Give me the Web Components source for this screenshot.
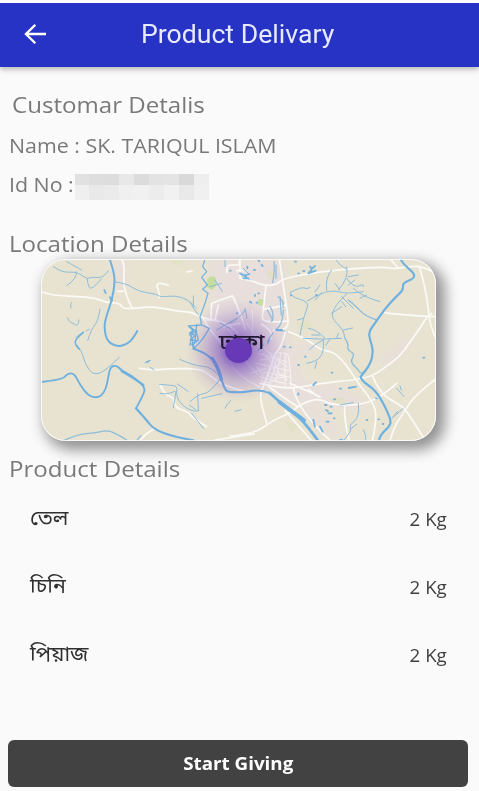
<!DOCTYPE html>
<html lang="en">
<head>
<meta charset="utf-8">
<title>Product Delivary</title>
<style>
body{margin:0;background:#fafafa;font-family:"Open Sans","Noto Sans Bengali",sans-serif}
</style>
</head>
<body>
<delivery-page>
  <app-bar slot="bar">Product Delivary</app-bar>
  <text-line style="--size:22.5px;--h:30px;--sx:1.07;margin:22px 0 0 3px">Customar Detalis</text-line>
  <text-line style="--size:20.5px;--h:28px;--sx:1.043;margin-top:11px">Name : SK. TARIQUL ISLAM</text-line>
  <text-line style="--size:20.5px;--h:28px;--sx:1.043;margin-top:11px">Id No :<masked-value slot="extra"></masked-value></text-line>
  <text-line style="--size:22.5px;--h:30px;--sx:1.07;margin-top:31.5px">Location Details</text-line>
  <map-card>ঢাকা</map-card>
  <text-line style="--size:22.5px;--h:30px;--sx:1.07;margin-top:13.5px">Product Details</text-line>
  <product-row amount="2 Kg">তেল</product-row>
  <product-row amount="2 Kg">চিনি</product-row>
  <product-row amount="2 Kg">পিয়াজ</product-row>
  <action-button slot="action">Start Giving</action-button>
</delivery-page>
<script>
// Turns a polyline path into a curve that bends at each vertex.
const smooth = d => {
  const lines = [];
  const tokens = d.match(/[a-zA-Z]|-?\d*\.?\d+/g);
  let cmd = 'M', x = 0, y = 0, i = 0;
  while (i < tokens.length) {
    if (/[a-zA-Z]/.test(tokens[i])) cmd = tokens[i++];
    const next = () => +tokens[i++];
    if (cmd === 'M') { x = next(); y = next(); lines.push([]); }
    else if (cmd === 'L') { x = next(); y = next(); }
    else if (cmd === 'l') { x += next(); y += next(); }
    else if (cmd === 'h') x += next();
    else if (cmd === 'H') x = next();
    else if (cmd === 'v') y += next();
    else if (cmd === 'V') y = next();
    lines[lines.length - 1].push([x, y]);
    if (cmd === 'M') cmd = 'L';
  }
  return lines.map(p => {
    let out = `M${p[0]}`;
    for (let k = 1; k < p.length - 1; k++) {
      const mid = [(p[k][0] + p[k + 1][0]) / 2, (p[k][1] + p[k + 1][1]) / 2];
      out += `Q${p[k]} ${k === p.length - 2 ? p[k + 1] : mid}`;
    }
    return p.length === 2 ? out + `L${p[1]}` : out;
  }).join('');
};

const define = (name, html) => customElements.define(name, class extends HTMLElement {
  constructor() {
    super();
    this.attachShadow({ mode: 'open' }).innerHTML = html;
    this.shadowRoot.querySelectorAll('.smooth path').forEach(p => p.setAttribute('d', smooth(p.getAttribute('d'))));
  }
  connectedCallback() {
    const amount = this.shadowRoot.querySelector('.amount');
    if (amount) amount.textContent = this.getAttribute('amount');
  }
});

define('delivery-page', `
<style>
:host{display:flex;flex-direction:column;height:791px;overflow:hidden;background:#fafafa}
main{flex:1;padding:0 9px;min-height:0}
footer{padding:0 11px 4px 8px}
</style>
<slot name="bar"></slot><main><slot></slot></main><footer><slot name="action"></slot></footer>`);

define('app-bar', `
<style>
:host{display:grid;grid-template-columns:141px 1fr;align-items:center;height:64px;margin-bottom:.5px;border-top:3px solid #fff;background:#2733c4;color:#e8eaff;box-shadow:0 2px 6px rgba(0,0,0,.3);font:25px/30px Roboto,sans-serif}
svg{display:block;margin-left:23px;width:24px;height:24px}
span{display:inline-block;transform:scaleX(1.065);transform-origin:0 50%;white-space:nowrap}
</style>
<svg viewBox="0 0 24 24" fill="none" stroke="#fff" stroke-width="2.3"><path d="M23 11H2.5M12.3 1.9 2.9 11l9.4 9.3"/></svg>
<div><span><slot></slot></span></div>`);

define('text-line', `
<style>
:host{display:flex;height:var(--h);font-size:var(--size);line-height:var(--h);color:#797979;white-space:nowrap}
span{display:block;transform:scaleX(var(--sx));transform-origin:0 50%;margin-left:-.2px}
</style>
<span><slot></slot></span><slot name="extra"></slot>`);

define('masked-value', `
<style>
:host{display:grid;grid-template-columns:14px 15px 15px 15px 15px 15px 15px 15px 15px;grid-template-rows:11px 15px;margin:4px 0 0 3.7px;height:26px}
</style>${['e1e1e1', 'dedede', 'dddddd', 'e8e8e8', 'dcdcdc', 'e3e3e3', 'e4e4e4', 'd9d9d9', 'eeeeee',
  'efefef', 'e9e9e9', 'ebebeb', 'f0f0f0', 'f1f1f1', 'ececec', 'f1f1f1', 'e9e9e9', 'f0f0f0']
  .map(c => `<i style="background:#${c}"></i>`).join('')}`);

define('product-row', `
<style>
:host{display:flex;justify-content:space-between;align-items:center;height:68.2px;color:#404040}
span{display:block;line-height:28px;white-space:nowrap}
.name{font:20px/28px "Noto Sans Bengali","Open Sans",sans-serif;transform:scaleX(1.07);transform-origin:0 50%;color:#303030;margin-left:20.5px;padding-top:3px}
.amount{font-size:17.5px;transform:scaleX(1.07);transform-origin:100% 50%;margin-right:23px;padding-top:1px}
</style>
<span class="name"><slot></slot></span><span class="amount"></span>`);

define('action-button', `
<style>
:host{display:flex;justify-content:center;align-items:center;height:47.5px;border-radius:6px;background:#424242;color:#fff;font-weight:700;font-size:18.5px;line-height:28px}
span{transform:scaleX(1.015)}
</style><span><slot></slot></span>`);

define('map-card', `
<style>
:host{display:block;position:relative;width:395px;height:182px;margin:-.5px 0 0 32px;border-radius:25px;box-shadow:6px 6px 14px 3px rgba(0,0,0,.42)}
svg{display:block;width:395px;height:182px;border-radius:25px}
.glow{position:absolute;left:142px;top:38px;width:108px;height:108px;background:radial-gradient(circle,rgba(103,58,183,.8) 10%,rgba(103,58,183,.5) 24%,rgba(103,58,183,.26) 40%,rgba(103,58,183,.08) 56%,rgba(103,58,183,0) 68%)}
.city{position:absolute;left:178px;top:71px;font:500 21px/28px "Noto Sans Bengali",sans-serif;color:#211832;white-space:nowrap;transform:scaleX(1.14);transform-origin:0 50%}
.pin{position:absolute;left:184px;top:79.5px;width:27px;height:25px;border-radius:50%;background:#6839b7}
.frame{position:absolute;inset:0;border:1.7px solid rgba(252,252,250,.9);border-radius:25px}
</style>
<svg viewBox="33 27 1185 546" preserveAspectRatio="none" fill="none" stroke-linecap="round" stroke-linejoin="round">
<defs><filter id="soft"><feGaussianBlur stdDeviation="14"/></filter></defs>
<rect x="33" y="27" width="1185" height="546" fill="#e8e3d1"/>
<g fill="#e8dedb" filter="url(#soft)">
<path d="M535 27H760L775 240 790 300 830 430 780 470 660 400 540 300 520 210 545 150z"/>
<path d="M255 27h35v90h-35zM780 390l150 20 100 60-40 10-180-25zM1030 340l60-40 50-50 10 20-70 80zM780 290l70-10 20 20-60 20zM820 450l120 100-30 20-100-90z"/>
</g>
<g fill="#c6dda0"><path d="M532 88q10-14 24-6l4 24-14 14-16-8z"/><circle cx="693" cy="157" r="10"/></g>
<g fill="#dde1bd" opacity=".6"><path d="M418 30h45l-18 18zM800 220l35-8 12 18-30 12zM895 445l45-5 10 22-30 5zM765 515l40 10-20 22zM710 65l18-5 2 25-15 3z"/></g>

<g class="smooth" stroke="#fbfaf6" stroke-width="5">
<path d="M33 125 65 137 190 141 224 157 270 159 281 179 354 170 398 174 440 184 485 186 520 205 562 212 600 225 624 250"/>
<path d="M276 30 284 42 279 121 306 174M262 124h18M415 106 394 98 378 103 388 126 388 143M470 66l16-3"/>
<path d="M328 355 367 361 425 355 505 357 528 366 580 409 650 425"/>
<path d="M390 403 403 434 432 442 434 472 476 487 484 500 530 530M330 572l20-26 20-7M555 570l80-12 38-6"/>
<path d="M520 205 535 232 560 262 600 320M545 160 607 137M607 137 628 178 646 238M545 160 543 205M565 165 555 210M530 210h30M580 230l50-10M600 45h28M628 45v-14M600 45h-10v22"/>
<path d="M630 30V85M630 85 668 92 700 107 740 105 758 85 890 62 1060 50 1095 57 1130 50 1180 48 1216 70"/>
<path d="M748 27 756 85 772 180 776 245 730 240M708 107 700 180 694 222 770 213M700 178 765 166M694 222l35 18-5 25M620 62h18"/>
<path d="M776 245 830 265 870 300 910 305 948 342 980 394 1025 450 1043 500 1027 572"/>
<path d="M766 245 755 290 734 310 705 400 690 430 696 470 710 520"/>
<path d="M600 558 673 552 730 510 780 490 815 460 865 445 900 463 960 466 1010 460 1060 435 1100 400"/>
<path d="M690 400 735 410 790 416 870 400 970 390 1028 378 1068 350 1108 320 1130 290 1170 235 1190 200 1205 190"/>
<path d="M1065 188 1115 196 1216 200M1168 48 1184 105 1196 180 1200 225 1216 262"/>
<path d="M1028 380 1050 430 1105 462 1130 480 1178 560M1216 388 1155 435 1120 490 1092 530 1080 572"/>
<path d="M780 400 870 440M790 416 803 480 900 572M765 482 845 572M710 405 770 450 803 470M945 470 940 500 958 572M835 418 865 440M1080 27l25 27"/>
</g>
<g class="smooth" stroke="#fbf8f8" stroke-width="3.2" opacity=".8">
<path d="M734 310 765 305 780 325 783 412M690 330 740 320 755 345 710 360 720 390 765 380M680 350 705 378 690 395 730 400 755 360 770 390M700 310 738 345 736 375M660 370 708 355M700 290 725 320 770 350M690 380 760 400M720 310 750 375M743 318 720 400M752 310 738 395M765 310 765 410M685 310 770 335M678 340 776 362M700 366 778 382"/>
<path d="M560 262 590 300 600 340 635 385 690 410M590 230 620 275 640 330 680 370M665 180 672 210 665 260M600 300 680 260M650 220 700 290"/>
</g>

<g class="smooth" stroke="#7db6da" stroke-width="3" opacity=".85">
<path d="M70 50 95 68 140 65 172 88 185 80 220 85 235 62M138 65 145 83 110 107M110 35 155 60M172 88 175 120 196 108 214 87"/>
<path d="M255 96 290 100 325 125 380 132 392 142 435 136 478 150 490 175 505 195M490 138v35M480 155l20 20"/>
<path d="M124 158l-4 5 3 11M112 203l5 14 18 5 8 8 4-20M210 178 204 215 185 235 173 272M178 238l-10 5M160 245 138 262M142 287 155 300 164 340 190 377 230 360 268 322"/>
<path d="M345 338l18-8-10 9M449 328 490 346 535 350 558 366 572 382M360 352l12 7"/>
<path d="M388 403 428 406 442 410 438 440 458 468 495 488 507 482M442 402 474 424M390 430 410 436 434 424M480 455 505 432 538 430 570 388M503 432 505 480M478 465 498 480M515 445l60-14M585 475 592 458 602 452M615 484l18-5M438 424 430 474M485 490 520 535"/>
<path d="M100 572 145 552 195 550 230 540 260 551 290 570M320 572l12-15" stroke-width="4"/>
<path d="M540 110l35-10M555 90l22 35M585 30v20M600 220 630 205 645 180M645 175l6 30M560 240 620 205M640 55l15 15M640 75 660 90M570 218l30 18"/>
<path d="M732 35 735 62 728 98M738 45v40M744 140 763 150 759 172M750 140l4 55M720 170 735 190 725 215M760 180 758 210 745 235 730 242 765 243M712 180l16 30M728 250 712 275M718 270l-5 12M700 285l-15 15" stroke-width="3.6"/>
</g>
<g stroke="#6fb1de" stroke-width="4" opacity=".9">
<path d="M525 27 518 50 530 65 515 82 532 105 518 118 534 130 525 160 510 200 515 225 538 235 517 268 492 296 485 262 478 252 500 245 475 228 515 225M475 228 488 240 480 285 505 270 497 240"/>
</g>
<g class="smooth" stroke="#7db6da" stroke-width="3" opacity=".85">
<path d="M781 127 815 110 830 118 840 113M781 127 782 140 835 155 830 180 820 205 810 255M832 153 875 128 915 121 950 132 1000 125M890 122 885 82 905 60M875 128 856 150M925 120 958 85 950 50M950 85 970 115 1005 100 1000 110M970 115l25 25 55 15M950 132 925 155 905 190 910 210 945 245 945 265M935 140l35 35M905 190l30-20M915 27 930 48 950 58M955 105l20-15M870 105l-15 20M955 80l30-5M820 205l-18 5M990 145l20-10M935 155l12 15M930 120l-15-20"/>
<path d="M955 150 980 170 1005 198 1040 210" stroke-width="4"/>
<path d="M820 265 880 270 935 265M880 270 850 285 838 300M885 265 860 238 835 235M880 270 883 305 860 335 830 340M920 265l5-15M900 267l-12 18M860 335l-5 20M845 255h25M940 240l28-6"/>
<path d="M945 265 955 280 952 300 975 312 960 335 985 360 995 375 1015 350" stroke-width="4"/>
<path d="M940 572 968 540 955 528 990 500 985 460M1000 540 1012 560 1005 572M1085 505 1120 475M1100 415l22 25M1110 408l4 12M930 465l40-7M960 538l20-15M1090 500l12-15"/>
</g>
<g class="smooth" stroke="#6fb1de" stroke-width="6">
<path d="M240 30 250 60 255 95 246 150 230 195 222 230 230 272 258 290 290 284 310 264 322 243"/>
<path d="M160 248 135 268 136 285 148 298" stroke-width="4.5"/>
<path d="M33 396 98 389 112 370 133 370 150 405 175 437 202 444 222 430 232 400 240 350 260 346 275 362 310 380 346 412 340 435 318 475" stroke-width="5.5"/>
<path d="M275 364 305 380 340 405M318 475 345 505 372 538 430 560 490 571" stroke-width="6.5"/>
<path d="M490 296 520 306 550 330 562 350 576 395 588 424 605 427 640 427 695 418 720 430"/>
<path d="M546 325 564 350 574 388" stroke-width="10"/>
<path d="M718 428 765 470 820 510 864 572" stroke-width="8"/>
<path d="M748 456 822 511" stroke-width="12"/>
<path d="M1113 30 1122 45 1153 70 1152 86 1118 98 1120 120 1098 140 1062 180 1035 220 1016 245 1020 270 1030 300 1022 345 992 380M992 380 995 392 1025 412 1050 440 1084 510 1078 530 1050 555 1047 572" stroke-width="6.5"/>
</g>
<g stroke="#68aede" stroke-width="6" opacity=".9">
<path d="M223 120l4 9M240 142l6 10M630 70l18 10M642 77l16-5M640 85h15M652 50v5M675 135v3M660 155l4 3M840 50l5 6 10-8M845 58l-10 12 22-8M820 63h3M740 240h16M600 62h2M672 60h3M685 30l3 4M695 45l3 3M685 130h2M680 158h2M795 35h3M805 70h2M850 405l8-8M885 465h5M888 480l6 4M895 490h10M890 515h6M912 448h4M850 510l5 20M870 530l8 15M930 570h6M956 414l22-4M905 368h2M1180 323h3M1038 445h3M1045 508h2M1058 522h2M1010 510h2M805 430v4M780 292h2M782 136h2M858 135h2M805 345h2M825 320h2M930 416h3M902 470h3M912 505h2M762 290h2M620 190h2" stroke-width="5.5"/>
<path d="M480 230l12 12-12 5 15 10-14 12 18 3-12 15 7 8M500 225l-5 45M350 336l10-5" stroke-width="4"/>
</g>
</svg>
<div class="glow"></div><div class="city"><slot></slot></div><div class="pin"></div><div class="frame"></div>`);
</script>
</body>
</html>
